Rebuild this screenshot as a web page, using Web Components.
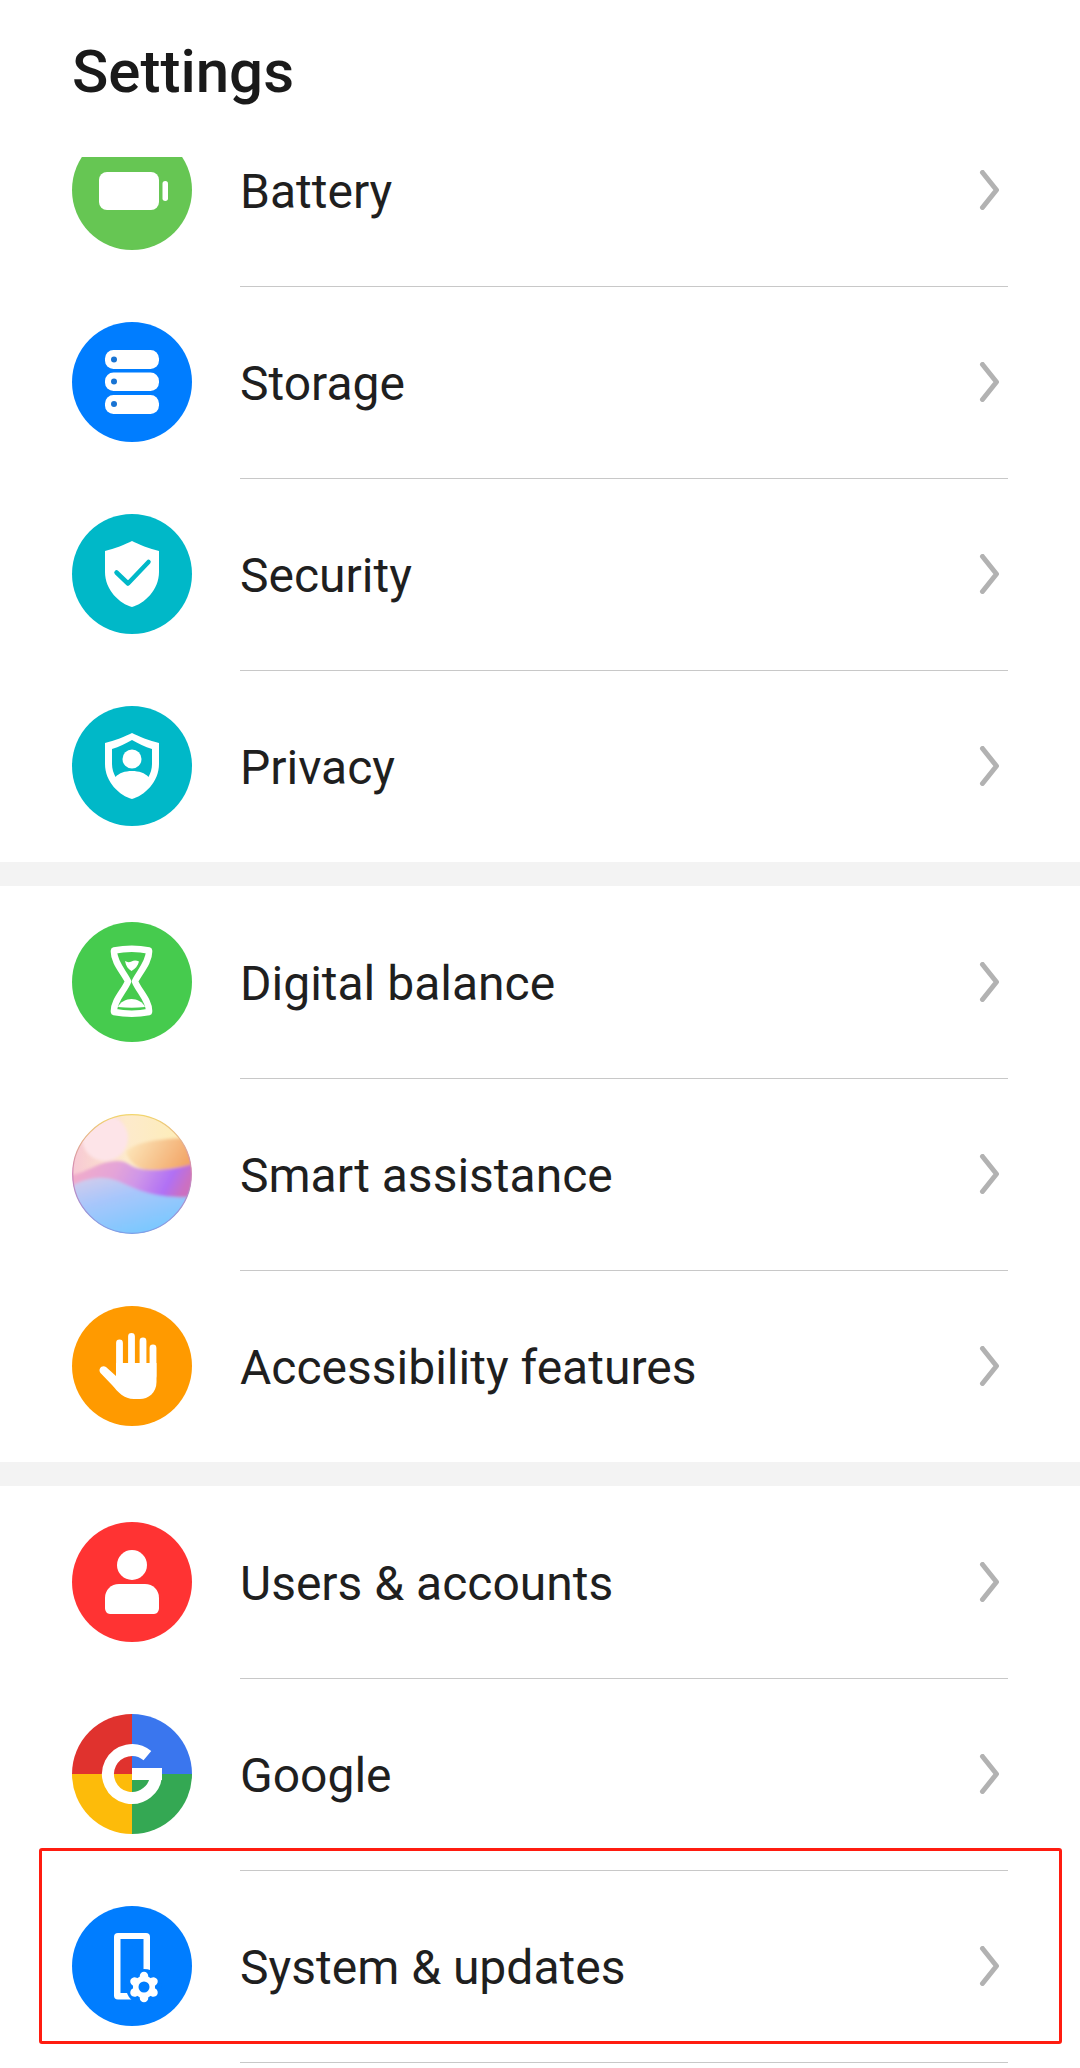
<!DOCTYPE html>
<html lang="en">
<head>
<meta charset="utf-8">
<title>Settings</title>
<style>
  html, body { margin: 0; background: #fff; }
  body { font-family: Roboto, "Liberation Sans", sans-serif; color: #1a1a1a; }
</style>
</head>
<body>
<settings-page heading="Settings">
  <settings-group>
    <settings-row icon="battery">Battery</settings-row>
    <settings-row icon="storage">Storage</settings-row>
    <settings-row icon="security">Security</settings-row>
    <settings-row icon="privacy" last>Privacy</settings-row>
  </settings-group>
  <settings-group>
    <settings-row icon="balance">Digital balance</settings-row>
    <settings-row icon="assist">Smart assistance</settings-row>
    <settings-row icon="access" last>Accessibility features</settings-row>
  </settings-group>
  <settings-group>
    <settings-row icon="users">Users &amp; accounts</settings-row>
    <settings-row icon="google">Google</settings-row>
    <settings-row icon="system">System &amp; updates</settings-row>
  </settings-group>
  <highlight-box slot="overlay"></highlight-box>
</settings-page>

<script>
const ICONS = {
  battery: `
    <circle cx="60" cy="60" r="60" fill="#66c653"/>
    <rect x="27" y="42" width="60" height="38" rx="8" fill="#fff"/>
    <rect x="90.500" y="51" width="5.500" height="20" rx="2.700" fill="#fff"/>`,
  storage: `
    <circle cx="60" cy="60" r="60" fill="#007dff"/>
    <rect x="33" y="28" width="54" height="19" rx="8.500" fill="#fff"/>
    <rect x="33" y="50.500" width="54" height="18.500" rx="8.500" fill="#fff"/>
    <rect x="33" y="73" width="54" height="19" rx="8.500" fill="#fff"/>
    <circle cx="42" cy="37.500" r="3" fill="#1873d3"/>
    <circle cx="42" cy="59.500" r="3" fill="#1873d3"/>
    <circle cx="42" cy="82" r="3" fill="#1873d3"/>`,
  security: `
    <circle cx="60" cy="60" r="60" fill="#00b8c8"/>
    <path d="M60 27C66 30 78 35 87 37V58C87 76 72 90 60 93C48 90 33 76 33 58V37C42 35 54 30 60 27Z" fill="#fff"/>
    <path d="M44.500 58.500L56 69.500L76.500 48" fill="none" stroke="#00b8c8" stroke-width="4.500" stroke-linecap="round" stroke-linejoin="round"/>`,
  privacy: `
    <circle cx="60" cy="60" r="60" fill="#00b8c8"/>
    <path d="M60 27C66 30 78 35 87 37V58C87 76 72 90 60 93C48 90 33 76 33 58V37C42 35 54 30 60 27Z" fill="#fff"/>
    <path d="M60 34C66 37 73 41 80 43V58C80 63 78.500 67 76.500 71C73 67 67 65 60 65C53 65 47 67 43.500 71C41.500 67 40 63 40 58V43C47 41 54 37 60 34Z" fill="#00b8c8"/>
    <circle cx="60" cy="53" r="9.500" fill="#fff"/>`,
  balance: `
    <circle cx="60" cy="60" r="60" fill="#46cb4e"/>
    <path d="M42 28.500Q60 25 77 28.500C78 40 66 52 63 59.500C66 68 78 79 77 90Q60 93.500 42 90C41 79 53 68 56 59.500C53 52 41 40 42 28.500Z" fill="none" stroke="#fff" stroke-width="6.500" stroke-linejoin="round"/>
    <path d="M53 39Q56 41 59.500 39.500Q63 37.500 67 39.500C66 44 63 47 59.500 49C56 47 54 44 53 39Z" fill="#fff"/>
    <path d="M46 85C48 80 54 77 59.500 77C65 77 71 80 73 85Q60 86.500 46 85Z" fill="#fff"/>`,
  assist: `
    <defs>
      <clipPath id="ball"><circle cx="60" cy="60" r="59.500"/></clipPath>
      <filter id="soft" x="-10%" y="-10%" width="120%" height="120%"><feGaussianBlur stdDeviation="1.400"/></filter>
      <linearGradient id="sky" x1="0" y1="0" x2="1" y2="0">
        <stop offset="0" stop-color="#f7c8d4"/><stop offset="0.450" stop-color="#fdeacc"/><stop offset="1" stop-color="#fdeeb4"/>
      </linearGradient>
      <linearGradient id="orange" x1="0" y1="0" x2="1" y2="0.300">
        <stop offset="0" stop-color="#fdebc0"/><stop offset="1" stop-color="#f2a668"/>
      </linearGradient>
      <linearGradient id="band" x1="0" y1="0" x2="1" y2="0.150">
        <stop offset="0" stop-color="#f4aec6"/><stop offset="0.400" stop-color="#e4a4d8"/><stop offset="0.600" stop-color="#cf96e8"/><stop offset="0.850" stop-color="#b070f5"/><stop offset="1" stop-color="#cc70c0"/>
      </linearGradient>
      <linearGradient id="sea" x1="0" y1="0" x2="0.600" y2="1">
        <stop offset="0" stop-color="#d8cdea"/><stop offset="0.400" stop-color="#a8c6fb"/><stop offset="1" stop-color="#74c8ff"/>
      </linearGradient>
      <linearGradient id="rim" x1="0.500" y1="0" x2="0.500" y2="1">
        <stop offset="0" stop-color="#f2d66e"/><stop offset="0.500" stop-color="#d184b8"/><stop offset="1" stop-color="#7d9ee8"/>
      </linearGradient>
    </defs>
    <g clip-path="url(#ball)">
      <rect width="120" height="120" fill="url(#sky)"/>
      <g filter="url(#soft)">
        <circle cx="33" cy="24" r="23" fill="#fde4e8"/>
        <path d="M54 38C60 30 80 24 124 24V54C100 58 80 60 68 54C60 50 56 44 54 38Z" fill="url(#orange)"/>
        <path d="M-4 62C16 58 24 50 36 48C48 46 52 47 58 51C70 59 100 57 124 49V85H-4Z" fill="url(#band)"/>
        <path d="M-4 74C14 63 30 61 46 67C64 75 80 85 124 83V124H-4Z" fill="url(#sea)"/>
      </g>
    </g>
    <circle cx="60" cy="60" r="59.300" fill="none" stroke="url(#rim)" stroke-width="1.200"/>`,
  access: `
    <circle cx="60" cy="60" r="60" fill="#ff9a00"/>
    <g stroke="#fff" stroke-width="6.800" stroke-linecap="round">
      <path d="M47.500 37V70M59.500 30.500V70M71 35V70M81 42V70"/>
    </g>
    <path d="M44 57H84.500V76C84.500 87 76 93 68 93H62C52 93 46 86 40 79L28.500 67C25.500 63 30 58.500 34 61L44 70Z" fill="#fff"/>`,
  users: `
    <circle cx="60" cy="60" r="60" fill="#ff3333"/>
    <circle cx="60" cy="43" r="15" fill="#fff"/>
    <path d="M47 62H73C81 62 87 68 87 76V86C87 89 85 92 82 92H38C35 92 33 89 33 86V76C33 68 39 62 47 62Z" fill="#fff"/>`,
  google: `
    <path d="M60 60V0A60 60 0 0 0 0 60Z" fill="#e0322e"/>
    <path d="M60 60V0A60 60 0 0 1 120 60Z" fill="#3a76ee"/>
    <path d="M60 60H0A60 60 0 0 0 60 120Z" fill="#fdbb0a"/>
    <path d="M60 60H120A60 60 0 0 1 60 120Z" fill="#34a853"/>
    <path d="M75.400 41.600A24 24 0 1 0 84 60" fill="none" stroke="#fff" stroke-width="12"/>
    <rect x="60" y="54" width="30" height="12" fill="#fff"/>`,
  system: `
    <circle cx="60" cy="60" r="60" fill="#007dff"/>
    <rect x="42" y="27" width="36" height="66.500" rx="4" fill="#fff"/>
    <rect x="48.500" y="33" width="23" height="54" fill="#007dff"/>
    <circle cx="72" cy="81" r="18" fill="#007dff"/>
    <g stroke="#fff" stroke-width="8.500" stroke-linecap="round">
      <path d="M72 70V92M62.500 75.500L81.500 86.500M62.500 86.500L81.500 75.500"/>
    </g>
    <circle cx="72" cy="81" r="11" fill="#fff"/>
    <circle cx="72" cy="81" r="5.500" fill="#007dff"/>`,
}

class SettingsIcon extends HTMLElement {
  constructor() {
    super()
    this.attachShadow({ mode: "open" })
  }

  connectedCallback() {
    const name = this.getAttribute("name")
    this.shadowRoot.innerHTML = `
      <style>
        :host { display: block; width: 120px; height: 120px; }
        svg { display: block; }
      </style>
      <svg width="120" height="120" viewBox="0 0 120 120">${ICONS[name] || ""}</svg>
    `
  }
}

class SettingsRow extends HTMLElement {
  constructor() {
    super()
    this.attachShadow({ mode: "open" })
  }

  connectedCallback() {
    const icon = this.getAttribute("icon")
    const last = this.hasAttribute("last")
    this.shadowRoot.innerHTML = `
      <style>
        :host {
          display: flex;
          height: 192px;
          padding-left: 72px;
          padding-right: 72px;
          gap: 48px;
          align-items: stretch;
        }
        settings-icon { align-self: center; flex: none; }
        .body {
          flex: 1;
          display: flex;
          align-items: center;
          justify-content: space-between;
          margin-bottom: -1px;
          border-bottom: ${last ? "1px solid transparent" : "1px solid #c8c8c8"};
          font-size: 48px;
          color: #1f1f1f;
        }
        .label { padding-top: 3px; }
        .chevron { display: block; margin-right: 6px; }
      </style>
      <settings-icon name="${icon}"></settings-icon>
      <div class="body">
        <div class="label"><slot></slot></div>
        <svg class="chevron" width="24" height="40" viewBox="0 0 24 40">
          <path d="M4.500 2.500L18.500 20L4.500 37.500" fill="none" stroke="#b2b2b2" stroke-width="5" stroke-linecap="round" stroke-linejoin="round"/>
        </svg>
      </div>
    `
  }
}

class SettingsGroup extends HTMLElement {
  constructor() {
    super()
    this.attachShadow({ mode: "open" })
  }

  connectedCallback() {
    this.shadowRoot.innerHTML = `
      <style>
        :host { display: flex; flex-direction: column; }
        :host(:not(:last-of-type)) { border-bottom: 24px solid #f3f3f3; }
      </style>
      <slot></slot>
    `
  }
}

class HighlightBox extends HTMLElement {
  constructor() {
    super()
    this.attachShadow({ mode: "open" })
  }

  connectedCallback() {
    this.shadowRoot.innerHTML = `
      <style>
        :host {
          position: absolute;
          left: 39px;
          top: 1848px;
          width: 1023px;
          height: 196px;
          box-sizing: border-box;
          border: 3px solid #ff1c10;
          border-radius: 3px;
          pointer-events: none;
        }
      </style>
    `
  }
}

class SettingsPage extends HTMLElement {
  constructor() {
    super()
    this.attachShadow({ mode: "open" })
  }

  connectedCallback() {
    const heading = this.getAttribute("heading") || ""
    this.shadowRoot.innerHTML = `
      <style>
        :host {
          display: flex;
          flex-direction: column;
          position: relative;
          width: 1080px;
          height: 2068px;
          overflow: hidden;
          background: #fff;
        }
        header {
          flex: none;
          height: 157px;
          box-sizing: border-box;
          padding: 39px 0 0 72px;
          font-size: 60px;
          line-height: 66px;
          font-weight: 500;
          color: #1a1a1a;
        }
        .scroller { flex: 1; min-height: 0; overflow: hidden; }
        .list { margin-top: -63px; }
      </style>
      <header>${heading}</header>
      <div class="scroller"><div class="list"><slot></slot></div></div>
      <slot name="overlay"></slot>
    `
  }
}

customElements.define("settings-icon", SettingsIcon)
customElements.define("settings-row", SettingsRow)
customElements.define("settings-group", SettingsGroup)
customElements.define("highlight-box", HighlightBox)
customElements.define("settings-page", SettingsPage)
</script>
</body>
</html>
